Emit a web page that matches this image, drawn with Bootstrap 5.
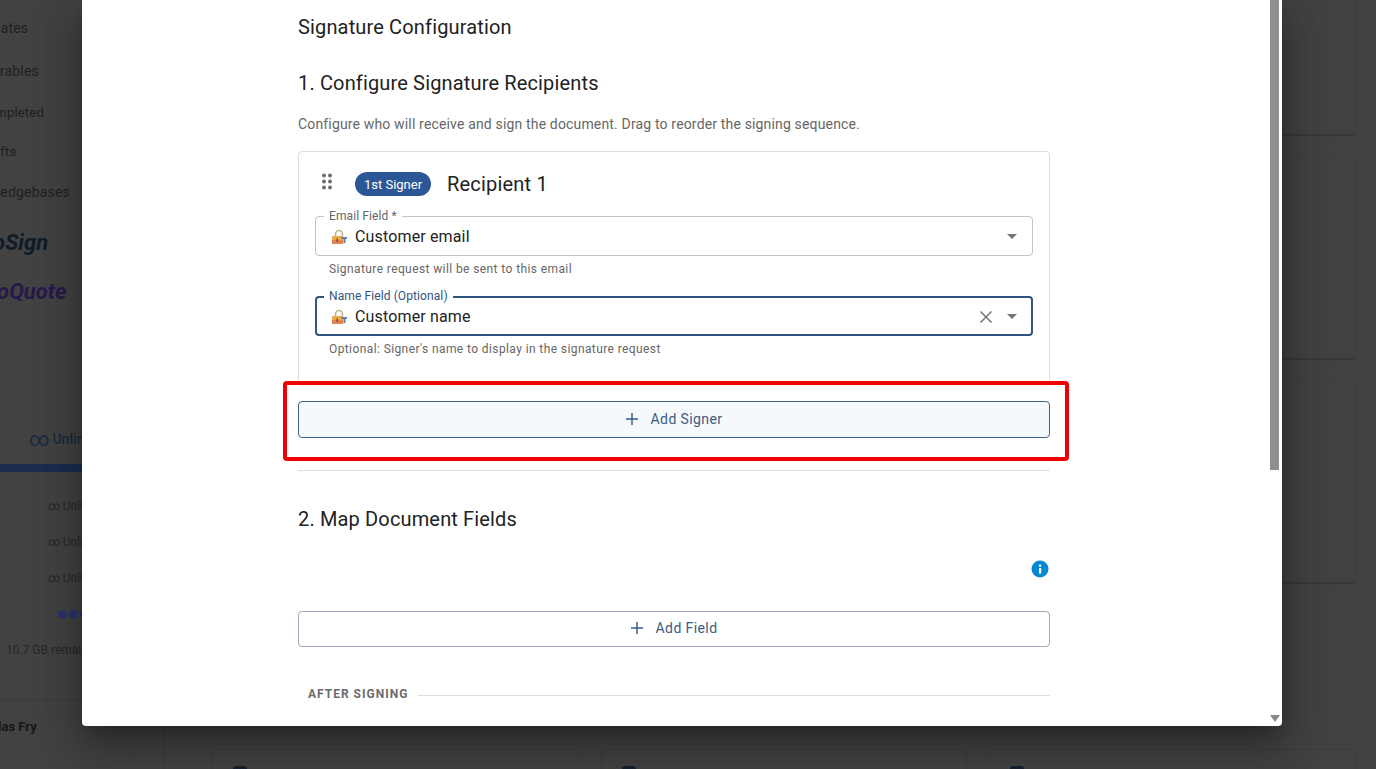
<!DOCTYPE html>
<html lang="en">
<head>
    <meta charset="UTF-8">
    <title>Signature Configuration</title>
    <meta name="viewport" content="width=device-width, initial-scale=1">
    <link href="https://cdn.jsdelivr.net/npm/bootstrap@5.3.0/dist/css/bootstrap.min.css" rel="stylesheet">
    <style>
        html, body { height: 100%; overflow: hidden; }
        body { font-family: Roboto, "Liberation Sans", sans-serif; background: #424242; color: #1c1c1c; }

        /* dimmed page behind the dialog */
        .behind { width: 1376px; height: 769px; overflow: hidden; }
        .side-panel { width: 131px; height: 769px; overflow: hidden; flex: none; color: #1f1f1f; white-space: nowrap; border-right: 1px solid #3c3c3c; }
        .side-rail { width: 33px; flex: none; border-right: 1px solid #3c3c3c; }
        .side-link { margin-left: -39px; font-size: 14px; line-height: 20px; letter-spacing: .2px; }
        .side-link.sub-link { font-size: 13px; }
        .side-logo { font-size: 22px; line-height: 26px; font-weight: 700; font-style: italic; }
        .logo-sign { color: #101b27; margin-left: -40px; margin-top: 20px; padding-top: 8px; }
        .logo-quote { color: #27184c; margin-left: -36px; margin-top: 23px; }
        .unlim-head { margin-top: 124px; padding-left: 29px; font-size: 14px; line-height: 20px; font-weight: 500; color: #1b2a3e; }
        .unlim-head b { font-size: 20px; font-weight: 400; line-height: 20px; vertical-align: -2px; }
        .unlim-bar { height: 8px; background: #1a2c4f; margin-top: 15px; }
        .unlim-row { padding-left: 48px; font-size: 12px; line-height: 16px; color: #262626; height: 36px; }
        .dot-row { padding-left: 58px; height: 16px; margin-bottom: 20px; gap: 2px; }
        .blue-dot { width: 9px; height: 9px; border-radius: 50%; background: #2c3470; flex: none; }
        .user-block { border-top: 1px solid #3a3a3a; margin-top: 22px; padding-top: 18px; }
        .user-name { margin-left: -36px; font-size: 13px; line-height: 16px; font-weight: 700; color: #161616; }
        .user-role { margin-left: -36px; font-size: 10px; line-height: 14px; color: #2a2a2a; }

        .main-area { flex: 1; min-width: 0; padding-left: 48px; padding-right: 20px; }
        .dim-card { background: #424242; border: 1px solid #3e3e3e; border-bottom-color: #353535; border-radius: 4px; height: 202px; margin-bottom: 22px; box-shadow: 0 1px 1px #383838; }
        .dim-card.first { height: 136px; border-top: 0; margin-top: -1px; }
        .dim-bottom { gap: 22px; }
        .dim-cell { flex: 1; height: 60px; border: 1px solid #3c3c3c; border-radius: 4px; padding: 16px 20px; }
        .dim-check { width: 14px; height: 14px; border-radius: 3px; background: #15202e; }

        /* dialog */
        .sig-dialog { position: absolute; left: 82px; top: 0; width: 1200px; height: 726px; background: #fff; border-radius: 0 0 4px 4px; overflow: hidden; box-shadow: 0 11px 15px -7px rgba(0,0,0,.25), 0 24px 38px 3px rgba(0,0,0,.18), 0 9px 46px 8px rgba(0,0,0,.16); }
        .sig-body { width: 752px; margin-left: 216px; padding-top: 15px; }
        .sig-title { font-size: 20px; line-height: 24px; font-weight: 400; margin: 0; letter-spacing: .15px; color: #222; }
        .sig-section { font-size: 20px; line-height: 24px; font-weight: 400; margin: 32px 0 0; letter-spacing: .15px; color: #222; }
        .sig-desc { font-size: 14px; line-height: 20px; color: #666; margin: 19px 0 17px; letter-spacing: .16px; }

        .signer-card { height: 234px; border: 1px solid #dedede; border-radius: 4px; padding: 0 16px; box-shadow: 0 1px 2px rgba(0,0,0,.06); }
        .signer-head { height: 64px; padding-top: 20px; }
        .drag-dots { width: 24px; height: 20px; margin-right: 16px; }
        .signer-pill { background: #2b5797; color: #fff; font-size: 13px; font-weight: 400; height: 24px; width: 76px; line-height: 25px; padding: 0; }
        .signer-name { font-size: 20px; line-height: 24px; margin-left: 16px; color: #222; letter-spacing: .2px; }

        .outline-field { position: relative; height: 40px; padding: 1px 15px 0; border: 1px solid #c4c4c4; border-radius: 4px; }
        .outline-field.is-focus { border: 2px solid #2f5480; padding: 1px 14px 0; }
        .field-label { position: absolute; left: 8px; top: -8px; background: #fff; padding: 0 5px; font-size: 12px; line-height: 14px; color: #666; letter-spacing: .1px; }
        .is-focus .field-label { left: 7px; top: -9px; color: #2f5480; }
        .field-value { font-size: 16px; line-height: 20px; color: #222; margin-left: 8px; letter-spacing: .15px; }
        .lock-ico { width: 16px; height: 16px; flex: none; }
        .field-caret { width: 0; height: 0; border-left: 5px solid transparent; border-right: 5px solid transparent; border-top: 5px solid #757575; margin-left: 14px; }
        .field-help { font-size: 12px; line-height: 14px; color: #666; margin: 6px 0 20px 14px; letter-spacing: .4px; }

        .btn.add-btn { display: flex; align-items: center; justify-content: center; gap: 12px; width: 100%; font-size: 14px; line-height: 20px; letter-spacing: .4px; color: #3b5c85; border-radius: 4px; padding: 0 1px 2px 0; }
        .btn.signer-add { height: 37px; margin-top: 16px; background: #f6f9fc; border: 1px solid #3f5f85; }
        .btn.field-add { height: 36px; background: #fff; border: 1px solid #a3a7bb; }
        .sig-rule { margin: 32px 0 0; border-top: 1px solid #dcdcdc; opacity: 1; }
        .info-line { height: 22px; margin-top: 27px; margin-bottom: 31px; }
        .after-line { margin-top: 37px; padding-left: 10px; }
        .after-label { font-size: 12px; line-height: 20px; font-weight: 700; letter-spacing: 1px; color: #6b6b6b; }
        .after-rule { flex: 1; height: 1px; background: #dcdcdc; margin-left: 10px; margin-top: 2px; }

        .red-box { position: absolute; left: 201px; top: 381px; width: 786px; height: 80px; border: 4px solid #f00000; border-radius: 4px; }
        .scroll-thumb { position: absolute; left: 1188px; top: 0; width: 9px; height: 470px; background: #8f8f8f; }
        .scroll-arrow { position: absolute; left: 1188px; top: 715px; width: 0; height: 0; border-left: 5px solid transparent; border-right: 5px solid transparent; border-top: 7px solid #8a8a8a; }
    </style>
</head>
<body>

<!-- page behind -->
<div class="behind d-flex">
    <div class="side-panel">
        <div class="side-link" style="margin-top:18px">Templates</div>
        <div class="side-link" style="margin-top:23px">Deliverables</div>
        <div class="side-link sub-link" style="margin-top:22px;margin-left:-21px">Completed</div>
        <div class="side-link sub-link" style="margin-top:19px;margin-left:-20px">Drafts</div>
        <div class="side-link" style="margin-top:20px">Knowledgebases</div>
        <div class="side-logo logo-sign">AutoSign</div>
        <div class="side-logo logo-quote">AutoQuote</div>
        <div class="unlim-head"><b>&#8734;</b>&#8201;Unlimited</div>
        <div class="unlim-bar"></div>
        <div class="unlim-row" style="margin-top:26px">&#8734;&#8201;Unlimited</div>
        <div class="unlim-row">&#8734;&#8201;Unlimited</div>
        <div class="unlim-row">&#8734;&#8201;Unlimited</div>
        <div class="dot-row d-flex align-items-center"><span class="blue-dot"></span><span class="blue-dot"></span><span class="blue-dot"></span></div>
        <div class="unlim-row" style="padding-left:6px">10.7 GB remaining</div>
        <div class="user-block">
            <div class="user-name">Nicholas Fry</div>
            <div class="user-role">Admin</div>
        </div>
    </div>
    <div class="side-rail"></div>
    <div class="main-area">
        <div class="dim-card first"></div>
        <div class="dim-card"></div>
        <div class="dim-card"></div>
        <div style="height:144px"></div>
        <div class="dim-bottom d-flex">
            <div class="dim-cell d-flex"><span class="dim-check"></span></div>
            <div class="dim-cell d-flex"><span class="dim-check"></span></div>
            <div class="dim-cell d-flex"><span class="dim-check"></span></div>
        </div>
    </div>
</div>

<!-- dialog -->
<div class="sig-dialog">
    <div class="sig-body">
        <h2 class="sig-title">Signature Configuration</h2>
        <h3 class="sig-section">1. Configure Signature Recipients</h3>
        <p class="sig-desc">Configure who will receive and sign the document. Drag to reorder the signing sequence.</p>

        <div class="card signer-card">
            <div class="signer-head d-flex align-items-start">
                <svg class="drag-dots" viewBox="0 0 24 20" fill="#6e6e6e">
                    <circle cx="9" cy="3.5" r="2"/><circle cx="15" cy="3.5" r="2"/>
                    <circle cx="9" cy="9.5" r="2"/><circle cx="15" cy="9.5" r="2"/>
                    <circle cx="9" cy="15.5" r="2"/><circle cx="15" cy="15.5" r="2"/>
                </svg>
                <span class="badge rounded-pill signer-pill">1st Signer</span>
                <span class="signer-name">Recipient 1</span>
            </div>

            <div class="outline-field d-flex align-items-center">
                <span class="field-label">Email Field *</span>
                <svg class="lock-ico" viewBox="0 0 16 16">
                    <path d="M4.5 7V5a3.5 3.5 0 0 1 7 0v2" fill="none" stroke="#c2b48c" stroke-width="1.6"/>
                    <rect x="1" y="7" width="11" height="8" rx="1" fill="#f0a84e"/>
                    <rect x="1" y="11" width="11" height="4" rx="1" fill="#e28452"/>
                    <path d="M10 8h6v1.6l-1.5.6V14h-2v-3.8L10 9.6z" fill="#5f7fb5"/>
                    <rect x="5.5" y="9.5" width="1.4" height="3.5" fill="#6b4a2e"/>
                </svg>
                <span class="field-value flex-grow-1">Customer email</span>
                <span class="field-caret"></span>
            </div>
            <div class="field-help">Signature request will be sent to this email</div>

            <div class="outline-field is-focus d-flex align-items-center">
                <span class="field-label">Name Field (Optional)</span>
                <svg class="lock-ico" viewBox="0 0 16 16">
                    <path d="M4.5 7V5a3.5 3.5 0 0 1 7 0v2" fill="none" stroke="#c2b48c" stroke-width="1.6"/>
                    <rect x="1" y="7" width="11" height="8" rx="1" fill="#f0a84e"/>
                    <rect x="1" y="11" width="11" height="4" rx="1" fill="#e28452"/>
                    <path d="M10 8h6v1.6l-1.5.6V14h-2v-3.8L10 9.6z" fill="#5f7fb5"/>
                    <rect x="5.5" y="9.5" width="1.4" height="3.5" fill="#6b4a2e"/>
                </svg>
                <span class="field-value flex-grow-1">Customer name</span>
                <svg width="14" height="14" viewBox="0 0 14 14" fill="none" stroke="#757575" stroke-width="1.5"><path d="M1.5 1.5l11 11M12.5 1.5l-11 11"/></svg>
                <span class="field-caret"></span>
            </div>
            <div class="field-help">Optional: Signer's name to display in the signature request</div>
        </div>

        <button type="button" class="btn add-btn signer-add">
            <svg width="14" height="14" viewBox="0 0 14 14" stroke="#3b5c85" stroke-width="1.5"><path d="M7 1v12M1 7h12"/></svg>
            Add Signer
        </button>
        <hr class="sig-rule">

        <h3 class="sig-section" style="margin-top:36px">2. Map Document Fields</h3>
        <div class="info-line d-flex justify-content-end align-items-center">
            <svg width="20" height="20" viewBox="0 0 20 20">
                <circle cx="10" cy="10" r="8.5" fill="#0288d1"/>
                <rect x="9" y="9" width="2.2" height="5.6" fill="#fff"/>
                <rect x="9" y="5.6" width="2.2" height="2.1" fill="#fff"/>
            </svg>
        </div>
        <button type="button" class="btn add-btn field-add">
            <svg width="14" height="14" viewBox="0 0 14 14" stroke="#3b5c85" stroke-width="1.5"><path d="M7 1v12M1 7h12"/></svg>
            Add Field
        </button>
        <div class="after-line d-flex align-items-center">
            <span class="after-label">AFTER SIGNING</span>
            <span class="after-rule"></span>
        </div>
    </div>

    <div class="red-box"></div>
    <div class="scroll-thumb"></div>
    <div class="scroll-arrow"></div>
</div>

<script src="https://cdn.jsdelivr.net/npm/bootstrap@5.3.0/dist/js/bootstrap.bundle.min.js"></script>
</body>
</html>
